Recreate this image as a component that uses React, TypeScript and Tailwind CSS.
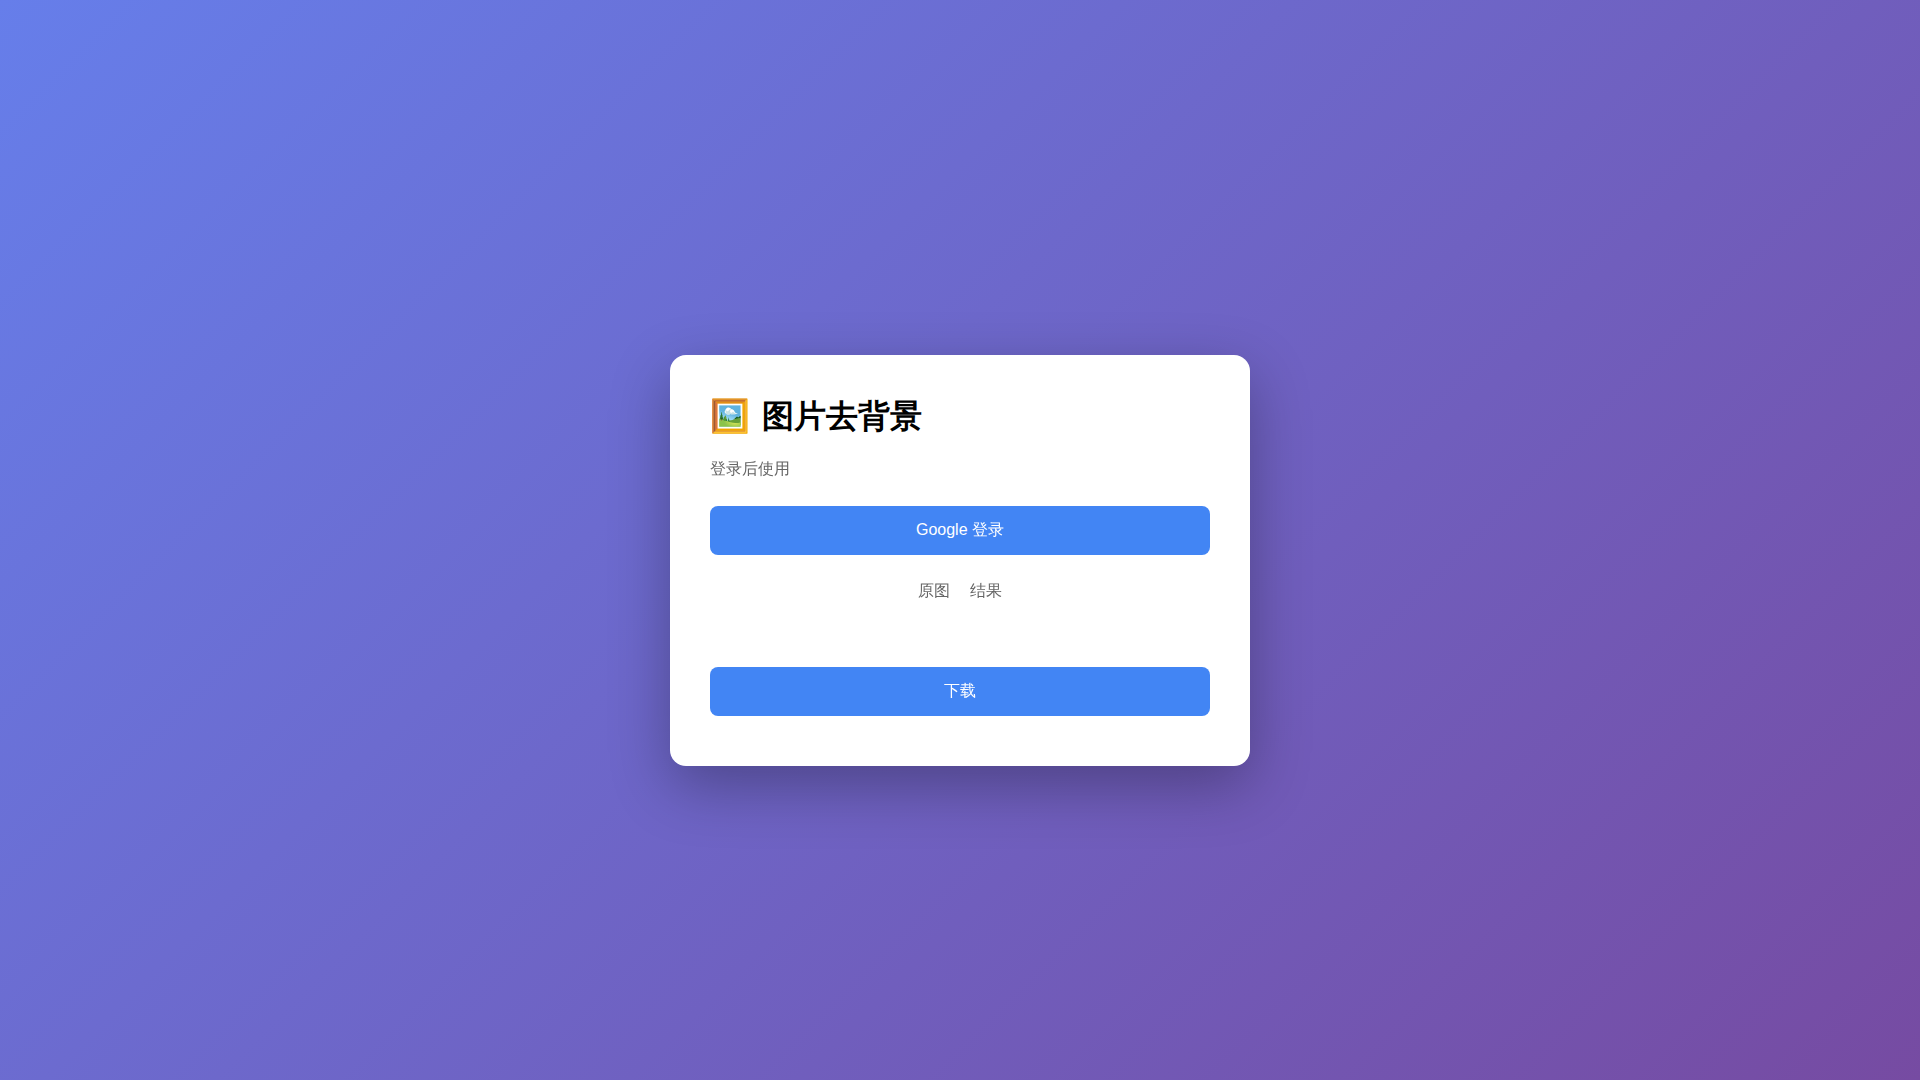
export default function App() {
  return (
    <div className="min-h-screen flex items-center justify-center bg-[linear-gradient(135deg,#667eea_0%,#764ba2_100%)] font-['Liberation_Sans','Droid_Sans_Fallback','WenQuanYi_Micro_Hei','WenQuanYi_Zen_Hei',sans-serif]">
      <div className="w-[580px] mt-[41px] p-10 rounded-2xl bg-white shadow-[0_20px_60px_rgba(0,0,0,0.3)]">
        <h1 className="flex gap-3 h-[42px] text-[32px] leading-[42px] font-bold text-black font-['DejaVu_Sans',sans-serif]">
          <span>🖼️</span>
          <span>图片去背景</span>
        </h1>
        <p className="mt-[20px] text-base text-[#666]">登录后使用</p>

        <button className="block w-full h-[49px] mt-[25px] pb-0.5 rounded-lg bg-[#4285f4] text-white text-base">
          Google 登录
        </button>

        <div className="flex justify-center gap-5 mt-6 text-base text-[#666]">
          <span>原图</span>
          <span>结果</span>
        </div>

        <button className="block w-full h-[49px] mt-16 mb-2.5 pb-0.5 rounded-lg bg-[#4285f4] text-white text-base">
          下载
        </button>
      </div>
    </div>
  );
}
